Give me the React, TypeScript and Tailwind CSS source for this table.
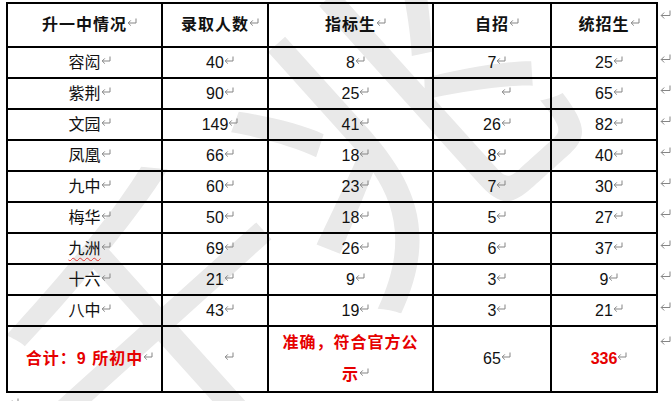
import React from 'react';

const Mark = ({ className = '', big = false }: { className?: string; big?: boolean }) =>
  big ? (
    <svg
      width="11"
      height="9"
      viewBox="0 0 11 9"
      fill="none"
      stroke="#858585"
      strokeWidth="1"
      className={`block ${className}`}
    >
      <path d="M10 0.5V5.5H1.2" />
      <path d="M4.2 2.5L1.2 5.5L4.2 8.5" />
    </svg>
  ) : (
    <svg
      width="10"
      height="8"
      viewBox="0 0 10 8"
      fill="none"
      stroke="#858585"
      strokeWidth="1"
      className={`inline-block align-[4px] ${className}`}
    >
      <path d="M9 0.5V5H1.2" />
      <path d="M3.8 2.4L1.2 5L3.8 7.6" />
    </svg>
  );

const rows = [
  ['容闳', '40', '8', '7', '25'],
  ['紫荆', '90', '25', '', '65'],
  ['文园', '149', '41', '26', '82'],
  ['凤凰', '66', '18', '8', '40'],
  ['九中', '60', '23', '7', '30'],
  ['梅华', '50', '18', '5', '27'],
  ['九洲', '69', '26', '6', '37'],
  ['十六', '21', '9', '3', '9'],
  ['八中', '43', '19', '3', '21'],
];

const headers = ['升一中情况', '录取人数', '指标生', '自招', '统招生'];

const cell = 'border-2 border-black px-[7px] text-center align-middle';

const Text = ({ value, className = '' }: { value: string; className?: string }) =>
  value ? (
    <span className={className}>
      {value}
      <Mark className="-mr-[10px]" />
    </span>
  ) : (
    <Mark className="ml-[18px] -mr-[10px]" />
  );

export default function App() {
  return (
    <div
      className="relative w-[672px] h-[401px] overflow-hidden bg-white text-[#111]"
      style={{ fontFamily: '"Liberation Sans", "Noto Sans CJK SC", sans-serif' }}
    >
      {/* watermark */}
      <div
        className="pointer-events-none absolute left-[270px] top-[214px] -translate-x-1/2 -translate-y-1/2 rotate-[-42deg] whitespace-nowrap text-[310px] leading-none text-[#e9e9e9] select-none"
        style={{ fontFamily: '"Noto Sans CJK SC", sans-serif' }}
      >
        千兆
      </div>

      <table className="relative mt-[2px] ml-[6px] w-[665px] table-fixed border-collapse text-[16px] leading-[20px]">
        <colgroup>
          <col className="w-[155px]" />
          <col className="w-[106px]" />
          <col className="w-[165px]" />
          <col className="w-[118px]" />
          <col className="w-[106px]" />
          <col className="w-[15px]" />
        </colgroup>
        <tbody>
          <tr className="h-[44px]">
            {headers.map((h) => (
              <td key={h} className={`${cell} font-bold tracking-[1px]`}>
                <Text value={h} />
              </td>
            ))}
            <td className="align-top pt-[7px] pl-[2px]">
              <Mark big />
            </td>
          </tr>
          {rows.map((r) => (
            <tr key={r[0]} className="h-[31px]">
              {r.map((v, i) => (
                <td key={i} className={cell}>
                  <Text
                    value={v}
                    className={
                      r[0] === '九洲' && i === 0
                        ? 'underline decoration-wavy decoration-[#e53935] decoration-1 underline-offset-[3px]'
                        : ''
                    }
                  />
                </td>
              ))}
              <td className="align-top pt-[7px] pl-[2px]">
                <Mark big />
              </td>
            </tr>
          ))}
          <tr className="h-[61px]">
            <td className={`${cell} font-bold tracking-[1px] text-[#e60000]`}>
              <Text value="合计：9 所初中" />
            </td>
            <td className={cell}>
              <Text value="" />
            </td>
            <td className={`${cell} font-bold tracking-[1px] text-[#e60000] leading-[32px]`}>
              准确，符合官方公示
              <Mark className="-mr-[10px]" />
            </td>
            <td className={cell}>
              <Text value="65" />
            </td>
            <td className={`${cell} font-bold text-[#e60000]`}>
              <Text value="336" />
            </td>
            <td className="align-top pt-[10px] pl-[2px]">
              <Mark big />
            </td>
          </tr>
        </tbody>
      </table>
      <div className="relative pl-[8px] pt-[5px]">
        <Mark big />
      </div>
    </div>
  );
}
